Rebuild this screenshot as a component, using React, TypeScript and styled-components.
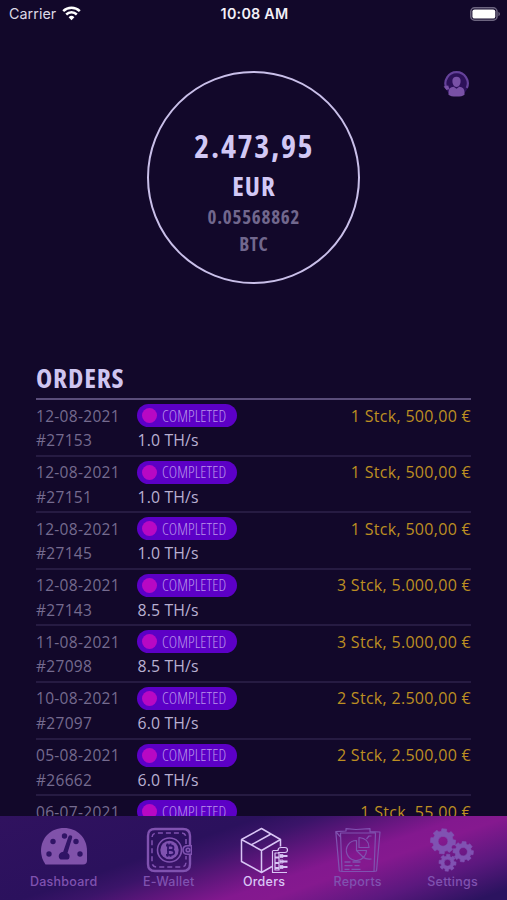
import React from "react";
import styled, { createGlobalStyle } from "styled-components";

const GlobalStyle = createGlobalStyle`
  * { box-sizing: border-box; }
  html, body { margin: 0; background: #12082a; }
  body { overflow: hidden; }
`;

const Screen = styled.div`
  width: 507px;
  height: 900px;
  display: flex;
  flex-direction: column;
  background: #12082a;
  font-family: "Open Sans", "Noto Sans", sans-serif;
  color: #d5cbf5;
  overflow: hidden;
`;

const StatusBar = styled.header`
  height: 28px;
  flex: none;
  display: grid;
  grid-template-columns: 1fr auto 1fr;
  align-items: center;
  padding: 0 7px 0 9px;
  font: 400 14.3px/28px Inter, sans-serif;
  color: #dcd9e6;
`;

const Carrier = styled.div`
  display: flex;
  align-items: center;
  gap: 6px;
  letter-spacing: 0.05px;

  svg {
    margin-top: -2px;
  }
`;

const Clock = styled.div`
  font-weight: 600;
  font-size: 14.3px;
  letter-spacing: 0.25px;
  color: #f2f0f8;
`;

const BatterySlot = styled.div`
  display: flex;
  justify-content: flex-end;
  padding-bottom: 1px;
`;

const Hero = styled.section`
  flex: none;
  height: 332px;
  display: grid;
  grid-template-columns: 1fr 213px 1fr;
  align-items: start;
  padding: 43px 37px 0 37px;
`;

const SupportSlot = styled.div`
  grid-column: 3;
  justify-self: end;
`;

const BalanceRing = styled.div`
  grid-column: 2;
  width: 213px;
  height: 213px;
  border: 2px solid #c9bfe9;
  border-radius: 50%;
  display: flex;
  flex-direction: column;
  align-items: center;
  padding-top: 50px;
  font-stretch: 75%;
`;

const Figure = styled.div<{ $size: number; $line: number; $spacing: number; $muted?: boolean }>`
  font-weight: 700;
  font-size: ${(p) => p.$size}px;
  line-height: ${(p) => p.$line}px;
  letter-spacing: ${(p) => p.$spacing}px;
  margin-right: -${(p) => p.$spacing}px;
  color: ${(p) => (p.$muted ? "#71678d" : "#d2c8f5")};
  white-space: nowrap;
`;

const Orders = styled.main`
  flex: 1;
  min-height: 0;
  overflow: hidden;
  padding: 0 36px;
`;

const Heading = styled.h1`
  margin: 0;
  height: 40px;
  border-bottom: 2px solid #5a4d7a;
  font-weight: 700;
  font-stretch: 75%;
  font-size: 27.5px;
  line-height: 35px;
  letter-spacing: 0.8px;
  color: #cfc5f0;
`;

const Row = styled.article`
  height: 56.6px;
  display: grid;
  grid-template-columns: 101px 1fr auto;
  grid-template-rows: 25px 24px;
  align-items: center;
  padding-top: 3px;
  border-bottom: 2px solid #261b42;
  font-size: 15.5px;
  letter-spacing: 0.3px;
  white-space: nowrap;
`;

const Muted = styled.span`
  color: #756b8f;
`;

const Power = styled.span`
  grid-column: 2;
  padding-left: 0.5px;
  font-size: 15.8px;
  letter-spacing: 0.15px;
  color: #b9b0d2;
`;

const Amount = styled.span`
  color: #bd8f22;
  font-size: 16px;
  letter-spacing: 0.3px;
`;

const Badge = styled.span`
  justify-self: start;
  display: flex;
  align-items: center;
  gap: 5px;
  width: 100px;
  height: 23px;
  padding-left: 5px;
  border-radius: 12px;
  background: #5c00c6;
  color: #b994ea;
  font-size: 15.8px;
  font-weight: 350;
  font-stretch: 75%;
  letter-spacing: 0.1px;
`;

const Dot = styled.i`
  width: 15px;
  height: 15px;
  border-radius: 50%;
  background: #b808c4;
`;

const TabBar = styled.nav`
  height: 84px;
  flex: none;
  display: flex;
  justify-content: space-between;
  padding: 10px 29px 0 30px;
  background: linear-gradient(161deg, #30125f 0%, #2b115d 35%, #3b1469 43%, #83188f 62%, #85198f 68%, #5b187e 82%, #2b135f 96%);
`;

const Tab = styled.a<{ $active?: boolean }>`
  display: flex;
  flex-direction: column;
  align-items: center;
  color: ${(p) => (p.$active ? "#d9c5f5" : "#8052b0")};
  font: 500 12.5px/14px Inter, sans-serif;
  letter-spacing: 0.25px;

  svg {
    display: block;
    margin-bottom: 1px;
  }
`;

const WifiIcon = () => (
  <svg width="19" height="15" viewBox="0 0 19 15" fill="none" stroke="#fff" strokeWidth="2.5">
    <path d="M1.2 5.2a12 12 0 0 1 16.6 0" />
    <path d="M4.2 8.5a7.6 7.6 0 0 1 10.6 0" />
    <path d="M9.5 14.2 6.6 11.2a4.2 4.2 0 0 1 5.8 0Z" fill="#fff" stroke="none" />
  </svg>
);

const BatteryIcon = () => (
  <svg width="30" height="14" viewBox="0 0 30 14">
    <rect x=".8" y=".8" width="26.2" height="12.4" rx="3.8" fill="none" stroke="#6d6580" strokeWidth="1.5" />
    <rect x="2.4" y="2.4" width="22.9" height="9.2" rx="2.2" fill="#fff" />
    <path d="M28.4 4.8q1.6.7 1.6 2.2t-1.6 2.2z" fill="#6d6580" />
  </svg>
);

const SupportIcon = () => (
  <svg width="27" height="27" viewBox="0 0 27 27" fill="#7951a6">
    <circle cx="13.5" cy="13.5" r="11.5" fill="#2c1159" />
    <path d="M3.4 17A11.2 11.2 0 1 1 23.8 17" fill="none" stroke="#65429a" strokeWidth="2.2" />
    <path d="m.6 15.6 4.6-1.2 1.2 3.8-3 .9z" />
    <path d="M9.4 9.7C9.4 7 11 5.7 13.5 5.7s4.1 1.3 4.1 4c0 3-1.2 6.2-4.1 6.2s-4.1-3.2-4.1-6.2Z" />
    <path d="M5.5 23.7v-2.5c0-3.6 1.8-5.3 5.2-5.5l2.8 2 2.8-2c3.4.2 5.2 1.9 5.2 5.5v2.5c-1.5 1.2-4 1.9-8 1.9s-6.5-.7-8-1.9Z" />
  </svg>
);

const DashboardIcon = () => (
  <svg width="46" height="48" viewBox="0 0 46 48" fill="#8052aa">
    <path d="M4.5 38.5Q0 32 0 25C0 11.5 10 2 23 2s23 9.500 23 23v9.500q0 4-4 4Z" />
    <g fill="#301466">
      <circle cx="8" cy="28" r="2.7" />
      <circle cx="12" cy="15.5" r="2.7" />
      <circle cx="23.5" cy="10" r="2.7" />
      <circle cx="35" cy="15.5" r="2.7" />
      <circle cx="39" cy="28" r="2.7" />
      <path d="M29 9.200q2.500 0 2.200 2.300L26.500 27q2.500 1.200 2 4.300-.3 2.200-2 2.200h-7q-2-1-1.800-3.500.3-3.500 4.500-4.200l5-14.500q.600-2.100 1.800-2.100Z" />
    </g>
  </svg>
);

const WalletIcon = () => (
  <svg width="46" height="48" viewBox="0 0 46 48" fill="none" stroke="currentColor">
    <path d="M44 20V10q0-7-7-7H9q-7 0-7 7v28q0 7 7 7h28q7 0 7-7V28" strokeWidth="2.4" />
    <path d="M40 18v-6q0-5-5-5H11q-5 0-5 5v24q0 5 5 5h24q5 0 5-5v-6" strokeWidth="1.5" strokeDasharray="5 3" />
    <circle cx="23.5" cy="24" r="12" strokeWidth="1.6" />
    <circle cx="23.5" cy="24" r="9.2" fill="currentColor" stroke="none" />
    <path d="M20 19.500h4.500q3 0 3 2.300T24.500 24H21m3.500 0q3.700 0 3.700 2.500T24.500 28.800H20m2-9.300v9.300m-.5-11.300v2m3-2v2m-3 9.300v2m3-2v2" stroke="#30136a" strokeWidth="1.8" />
    <path d="M45.500 19.700H41.500q-4.500 0-4.500 4.300t4.500 4.300h4Z" fill="#34166d" strokeWidth="1.6" />
    <circle cx="42" cy="24" r="1.8" strokeWidth="1.6" />
  </svg>
);

const OrdersIcon = () => (
  <svg width="48" height="48" viewBox="0 0 48 48" fill="none" stroke="currentColor" strokeWidth="1.5" strokeLinejoin="round">
    <path d="M1.500 13.500 21.500 2.500l19 11v7M1.500 13.500v22L21.500 46.500V24.500ZM21.500 24.500l19-11M11 19l20-11M21.500 46.500l10.500-6" />
    <path d="M33 24.500h5q0-3 3-3h4q2.500 0 2.500 2.500t-2.500 2.500h-7M32.500 24.500v22H47M35 27v17h4V27Z" strokeWidth="1.2" />
    <path d="M40 30h7.500M40 35.500h7.500M40 41h7.500" strokeWidth="2" />
    <path d="M35 31.500h4M35 37h4M35 42h4" strokeWidth="1.8" />
    <path d="M40 28.500h3v3h-3zM40 34h3v3h-3zM40 39.500h3v3h-3z" strokeWidth=".8" />
  </svg>
);

const ReportsIcon = () => (
  <svg width="46" height="48" viewBox="0 0 46 48" fill="none" stroke="currentColor" strokeWidth="1.2" strokeLinejoin="round">
    <path d="M5.500 7h35l-1.500 38.500h-32ZM5.500 11 .8 5.600 11 5V2.700l10 .8 14-.8v3l10 .3L41.500 45l-2.500 .5M.8 5.600 4.300 45l2.700 .5" />
    <path d="M21.500 14.500A10 10 0 1 0 28.500 31.500L21.500 24.500ZM24 11.500V21.500H34q0-9-10-10ZM31.500 13l2.500-3H36.500M28.500 31.500q2 2 8 1.500M21.500 24.500h10q0 4-3 7" />
    <path d="M9.500 36h6m2 0h8M9.500 39.700h8m2 0h5M9.500 43.400h5m2 0h9" strokeWidth="1.3" />
  </svg>
);

const gearPath = (cx: number, cy: number, outer: number, inner: number, hole: number) => {
  const points: string[] = [];
  for (let tooth = 0; tooth < 8; tooth++) {
    [[-0.26, inner], [-0.19, outer], [0.19, outer], [0.26, inner]].forEach(([shift, radius]) => {
      const angle = (tooth * Math.PI) / 4 + shift + 0.1;
      points.push(`${(cx + radius * Math.cos(angle)).toFixed(2)} ${(cy + radius * Math.sin(angle)).toFixed(2)}`);
    });
  }
  return `M${points.join("L")}ZM${cx - hole} ${cy}a${hole} ${hole} 0 1 0 ${2 * hole} 0a${hole} ${hole} 0 1 0 ${-2 * hole} 0Z`;
};

const SettingsIcon = () => (
  <svg width="46" height="48" viewBox="0 0 46 48" fill="#8052b2" fillRule="evenodd" stroke="#8052b2" strokeWidth=".6" strokeLinejoin="round">
    <path d={gearPath(13, 15.3, 12.7, 10.2, 4.9)} />
    <path d={gearPath(33.2, 25.7, 10.3, 8.2, 4.2)} />
    <path d={gearPath(17.5, 36.7, 8.6, 6.6, 3.4)} />
  </svg>
);

const orders = [
  { date: "12-08-2021", id: "#27153", power: "1.0 TH/s", amount: "1 Stck, 500,00 €" },
  { date: "12-08-2021", id: "#27151", power: "1.0 TH/s", amount: "1 Stck, 500,00 €" },
  { date: "12-08-2021", id: "#27145", power: "1.0 TH/s", amount: "1 Stck, 500,00 €" },
  { date: "12-08-2021", id: "#27143", power: "8.5 TH/s", amount: "3 Stck, 5.000,00 €" },
  { date: "11-08-2021", id: "#27098", power: "8.5 TH/s", amount: "3 Stck, 5.000,00 €" },
  { date: "10-08-2021", id: "#27097", power: "6.0 TH/s", amount: "2 Stck, 2.500,00 €" },
  { date: "05-08-2021", id: "#26662", power: "6.0 TH/s", amount: "2 Stck, 2.500,00 €" },
  { date: "06-07-2021", id: "", power: "", amount: "1 Stck, 55,00 €" },
];

const tabs = [
  { label: "Dashboard", Icon: DashboardIcon },
  { label: "E-Wallet", Icon: WalletIcon },
  { label: "Orders", Icon: OrdersIcon },
  { label: "Reports", Icon: ReportsIcon },
  { label: "Settings", Icon: SettingsIcon },
];

export default function App() {
  return (
    <Screen>
      <GlobalStyle />
      <StatusBar>
        <Carrier>Carrier <WifiIcon /></Carrier>
        <Clock>10:08 AM</Clock>
        <BatterySlot><BatteryIcon /></BatterySlot>
      </StatusBar>
      <Hero>
        <BalanceRing>
          <Figure $size={32} $line={46} $spacing={1.7}>2.473,95</Figure>
          <Figure $size={27} $line={34} $spacing={1}>EUR</Figure>
          <Figure $size={19} $line={28} $spacing={0.75} $muted>0.05568862</Figure>
          <Figure $size={19} $line={26} $spacing={0.6} $muted>BTC</Figure>
        </BalanceRing>
        <SupportSlot><SupportIcon /></SupportSlot>
      </Hero>
      <Orders>
        <Heading>ORDERS</Heading>
        {orders.map((order, index) => (
          <Row key={index}>
            <Muted>{order.date}</Muted>
            <Badge><Dot />COMPLETED</Badge>
            <Amount>{order.amount}</Amount>
            <Muted>{order.id}</Muted>
            <Power>{order.power}</Power>
          </Row>
        ))}
      </Orders>
      <TabBar>
        {tabs.map(({ label, Icon }) => (
          <Tab key={label} $active={label === "Orders"}>
            <Icon />
            {label}
          </Tab>
        ))}
      </TabBar>
    </Screen>
  );
}
